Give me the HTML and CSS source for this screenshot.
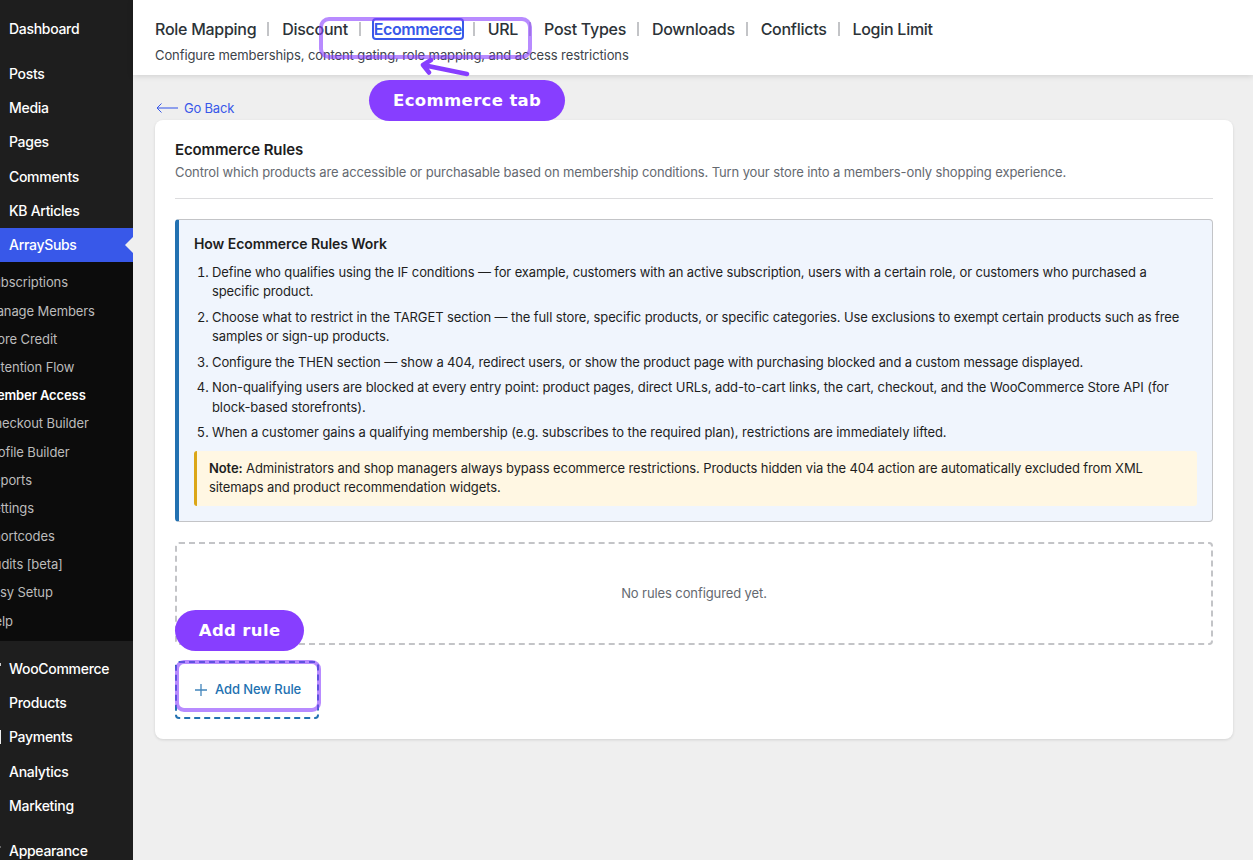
FILE: index.html
```html
<!DOCTYPE html>
<html lang="en">
<head>
<meta charset="utf-8">
<title>Ecommerce Rules</title>
<link rel="stylesheet" href="styles.css">
</head>
<body>
<div class="app">
  <nav class="sidebar">
    <a class="item">Dashboard</a>
    <div class="gap"></div>
    <a class="item">Posts</a>
    <a class="item">Media</a>
    <a class="item">Pages</a>
    <a class="item">Comments</a>
    <a class="item">KB Articles</a>
    <a class="item current">ArraySubs</a>
    <div class="submenu">
      <a>Subscriptions</a>
      <a>Manage Members</a>
      <a>Store Credit</a>
      <a>Retention Flow</a>
      <a class="on">Member Access</a>
      <a>Checkout Builder</a>
      <a>Profile Builder</a>
      <a>Reports</a>
      <a>Settings</a>
      <a>Shortcodes</a>
      <a>Audits [beta]</a>
      <a>Easy Setup</a>
      <a>Help</a>
    </div>
    <div class="gap"></div>
    <a class="item edge-woo">WooCommerce</a>
    <a class="item">Products</a>
    <a class="item edge-pay">Payments</a>
    <a class="item">Analytics</a>
    <a class="item">Marketing</a>
    <div class="gap"></div>
    <a class="item edge-app">Appearance</a>
  </nav>
  <div class="page">
    <header class="header">
      <div class="tabs">
        <a>Role Mapping</a><i></i><a>Discount</a><i></i><a class="active">Ecommerce</a><i></i><a>URL</a><i></i><a>Post Types</a><i></i><a>Downloads</a><i></i><a>Conflicts</a><i></i><a>Login Limit</a>
      </div>
      <p class="tagline">Configure memberships, content gating, role mapping, and access restrictions</p>
    </header>
    <main class="main">
      <a class="back">
        <svg width="22" height="10" viewBox="0 0 22 10" fill="none" stroke="#3858e9"><path d="M5.5 .5 1 5l4.500 4.500"/><path d="M1 5h21" stroke-width="1.500" opacity=".7"/></svg>
        <span>Go Back</span>
      </a>
      <section class="card">
        <h1>Ecommerce Rules</h1>
        <p class="desc">Control which products are accessible or purchasable based on membership conditions. Turn your store into a members-only shopping experience.</p>
        <div class="info">
          <h2>How Ecommerce Rules Work</h2>
          <ol>
            <li>Define who qualifies using the IF conditions — for example, customers with an active subscription, users with a certain role, or customers who purchased a<br>specific product.</li>
            <li class="mid">Choose what to restrict in the TARGET section — the full store, specific products, or specific categories. Use exclusions to exempt certain products such as free<br>samples or sign-up products.</li>
            <li>Configure the THEN section — show a 404, redirect users, or show the product page with purchasing blocked and a custom message displayed.</li>
            <li class="loose">Non-qualifying users are blocked at every entry point: product pages, direct URLs, add-to-cart links, the cart, checkout, and the WooCommerce Store API (for<br>block-based storefronts).</li>
            <li class="loose">When a customer gains a qualifying membership (e.g. subscribes to the required plan), restrictions are immediately lifted.</li>
          </ol>
          <div class="note"><b>Note:</b> Administrators and shop managers always bypass ecommerce restrictions. Products hidden via the 404 action are automatically excluded from XML<br>sitemaps and product recommendation widgets.</div>
        </div>
        <div class="empty">No rules configured yet.</div>
        <button class="add">
          <svg width="12" height="12" viewBox="0 0 12 12" stroke="#2271b1" stroke-width="1.300" opacity=".85"><path d="M6 0v12M0 6h12"/></svg>
          <span>Add New Rule</span>
        </button>
      </section>
    </main>
  </div>
  <div class="ring ring-tab"></div>
  <div class="ring ring-add"></div>
  <svg class="arrow" width="56" height="24" viewBox="0 0 56 24" fill="none" stroke="#873eff" stroke-width="4.500" stroke-linecap="round" stroke-linejoin="round"><path d="M51 16 7 7M15 2 7 7l6 7.500"/></svg>
  <div class="pill pill-tab">Ecommerce tab</div>
  <div class="pill pill-add">Add rule</div>
</div>
</body>
</html>
```
FILE: styles.css
```css
* { box-sizing: border-box; }
body { margin: 0; font-family: Inter, "Liberation Sans", sans-serif; font-size: 13px; letter-spacing: -0.1px; color: #1e1e1e; background: #efefef; }
h1, h2, p, ol { margin: 0; padding: 0; }
.app { position: relative; display: flex; width: 1253px; height: 860px; overflow: hidden; }

.sidebar { width: 133px; flex: none; height: 860px; padding-top: 12px; background: #1e1e1e; overflow: hidden; }
.item { display: block; position: relative; height: 34.17px; line-height: 34.2px; padding-left: 9px; font-size: 14px; font-weight: 500; letter-spacing: -0.3px; color: #fff; white-space: nowrap; }
.gap { height: 11px; }
.current { background: #3858e9; }
.current::after { content: ""; position: absolute; right: 0; top: 9px; border: 8px solid transparent; border-left: 0; border-right-color: #efefef; }
.submenu { height: 379px; padding-top: 6.300px; background: #0c0c0c; }
.submenu a { display: block; height: 28.2px; line-height: 28.2px; margin-left: -15px; color: #bcbcbc; white-space: nowrap; }
.submenu .on { color: #fff; font-weight: 600; }
.edge-woo::before, .edge-pay::before, .edge-app::before { content: ""; position: absolute; left: 0; width: 1px; background: #ccc; }
.edge-woo::before { top: 11px; height: 3px; }
.edge-pay::before { top: 10px; height: 14px; background: #eee; }
.edge-app::before { top: 12px; height: 2px; background: #666; }

.page { flex: 1; min-width: 0; }
.header { position: relative; height: 75px; padding: 18px 22px 0; background: #fff; box-shadow: 0 1px 6px rgba(0,0,0,.14); }
.tabs { display: flex; align-items: center; height: 22px; font-size: 16px; font-weight: 500; line-height: 22px; letter-spacing: -0.27px; color: #2c3338; white-space: nowrap; }
.tabs i { width: 2px; height: 14px; margin: 0 12.900px 0 11px; background: #c3c4c7; }
.active { color: #3858e9; border-radius: 2px; box-shadow: 0 0 0 2px #3858e9; line-height: 18px; font-weight: 600; letter-spacing: -0.42px; }
.tagline { margin-top: 5px; line-height: 20px; color: #3c434a; }

.main { padding: 24px 20px 0 22px; }
.back { display: flex; align-items: center; gap: 6px; height: 18px; padding-left: 1px; margin-bottom: 3px; letter-spacing: -0.2px; color: #3858e9; }
.card { height: 619px; padding: 20px; background: #fff; border-radius: 8px; box-shadow: 0 1px 3px rgba(0,0,0,.12); }
h1 { font-size: 15px; line-height: 20px; font-weight: 600; letter-spacing: -0.12px; }
.desc { margin-top: 2px; padding-bottom: 15px; height: 37px; line-height: 21px; letter-spacing: -0.115px; color: #646970; border-bottom: 1px solid #dcdcde; white-space: nowrap; }
.info { height: 303px; margin-top: 20px; padding: 15px; border: 1px solid #c3c4c7; border-left: 4px solid #2271b1; border-radius: 4px; background: #f0f5fd; }
h2 { font-size: 14px; line-height: 18px; font-weight: 600; letter-spacing: -0.07px; }
ol { margin-top: 9.500px; padding-left: 18px; }
li { line-height: 19.5px; margin-bottom: 6px; white-space: nowrap; letter-spacing: -0.12px; }
.mid { letter-spacing: -0.1px; }
.loose { letter-spacing: -0.087px; }
.note { height: 55px; margin-top: 8px; padding: 8px 12px; line-height: 19.5px; letter-spacing: -0.105px; background: #fff7e3; border-left: 3px solid #dba617; border-radius: 3px; white-space: nowrap; }
.note b { font-weight: 600; }
.empty { display: flex; align-items: center; justify-content: center; height: 103px; margin-top: 20px; padding-bottom: 1px; border: 2px dashed #c3c4c7; border-radius: 4px; color: #646970; }
.add { display: flex; align-items: center; gap: 8px; width: 144px; height: 58px; margin-top: 16px; padding: 0 0 1px 18px; border: 2px dashed #2271b1; border-radius: 4px; background: #fff; font: 500 13px Inter, sans-serif; letter-spacing: -0.1px; color: #2271b1; white-space: nowrap; }
.add span { margin-top: -1px; }

.ring { position: absolute; border: 4px solid rgba(136,62,255,.6); }
.ring-tab { left: 319px; top: 17px; width: 213px; height: 42px; border-radius: 10px; }
.ring-add { left: 175px; top: 660px; width: 146px; height: 52px; border-radius: 9px; }
.arrow { position: absolute; left: 416px; top: 58px; }
.pill { position: absolute; height: 41px; border-radius: 21px; text-align: center; background: #873eff; color: #fff; font: 700 16.500px/41px "DejaVu Sans", sans-serif; letter-spacing: 0.35px; text-indent: 0.35px; white-space: nowrap; }
.pill-tab { left: 369px; top: 80px; width: 196px; }
.pill-add { left: 175px; top: 610px; width: 129px; }
```
